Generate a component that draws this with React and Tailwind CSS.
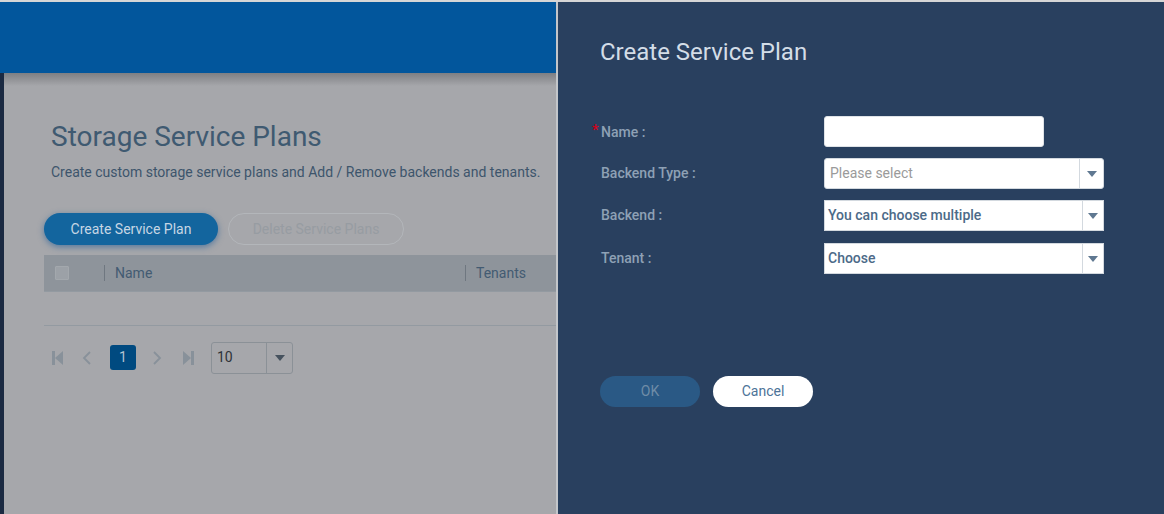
import React from "react";

function Caret({ className = "" }) {
  return (
    <svg width="10" height="6" viewBox="0 0 10 6" className={className}>
      <path d="M0 0 H10 L5 6 Z" fill="currentColor" />
    </svg>
  );
}

function SelectBox({ text, placeholder, rounded, btnW }) {
  return (
    <div
      className={`flex h-[31px] w-[280px] bg-white border border-[#d3d9df] ${rounded ? "rounded-[3px]" : ""}`}
    >
      <div
        className={`flex-1 flex items-center text-[14px] ${placeholder ? "pl-[5px] text-[#9a9a9a]" : "pl-[3px] text-[#4c6a88] font-medium"}`}
      >
        {text}
      </div>
      <div className={`${btnW} border-l border-[#d3d9df] flex items-center justify-center text-[#5f7891]`}>
        <Caret />
      </div>
    </div>
  );
}

export default function App() {
  return (
    <div
      className="w-[1164px] h-[514px] overflow-hidden flex flex-col bg-[#29405f]"
      style={{ fontFamily: "Roboto, 'Noto Sans', sans-serif" }}
    >
      <div className="h-[2px] bg-[#d6d6d6] shrink-0" />
      <div className="flex flex-1 min-h-0">
        {/* left dimmed page */}
        <div className="w-[556px] flex flex-col shrink-0 overflow-hidden">
          <div className="h-[71px] bg-[#02569c] shrink-0" />
          <div className="flex flex-1 min-h-0">
            <div className="w-[4px] bg-[#1b2a42] shrink-0" />
            <div className="flex-1 bg-[linear-gradient(to_bottom,#7e7f83_0px,#a6a7ab_13px,#a6a7ab_100%)] pl-[40px] pt-[46px] overflow-hidden">
              <div className="pl-[7px] text-[28px] leading-[36px] text-[#3f5a71]">Storage Service Plans</div>
              <div className="pl-[7px] mt-[7px] text-[14px] leading-[20px] text-[#3d556c] whitespace-nowrap">
                Create custom storage service plans and Add / Remove backends and tenants.
              </div>
              <div className="flex items-center gap-[10px] mt-[31px]">
                <div className="w-[174px] h-[32px] rounded-full bg-[#13659e] shadow-[0_2px_6px_rgba(30,90,150,0.6)] flex items-center justify-center text-[14px] text-[#c6d6e4]">
                  Create Service Plan
                </div>
                <div className="w-[176px] h-[32px] rounded-full border border-[#b3b6ba] flex items-center justify-center text-[14px] text-[#979ca2]">
                  Delete Service Plans
                </div>
              </div>
              <div className="mt-[10px] w-[560px] h-[36px] bg-[#8e949b] flex items-center text-[14px] text-[#435b72]">
                <div className="w-[14px] h-[14px] ml-[11px] bg-[#9ca1a7] border border-[#a3a8ad] rounded-[1px]" />
                <div className="w-px h-[16px] bg-[#6f7780] ml-[35px]" />
                <div className="ml-[10px] w-[350px]">Name</div>
                <div className="w-px h-[16px] bg-[#6f7780]" />
                <div className="ml-[10px]">Tenants</div>
              </div>
              <div className="w-[560px] h-[35px] border-t border-b border-[#939aa1]" />
              <div className="flex items-center mt-[16px] h-[31px]">
                <svg width="12" height="16" viewBox="0 0 12 16" className="ml-[8px] text-[#88919a]">
                  <rect x="0" y="1" width="3" height="14" fill="currentColor" />
                  <path d="M3 8 L11 1 V15 Z" fill="currentColor" />
                </svg>
                <svg width="10" height="16" viewBox="0 0 10 16" className="ml-[18px] text-[#88919a]">
                  <path d="M8 2 L2 8 L8 14" stroke="currentColor" strokeWidth="1.8" fill="none" />
                </svg>
                <div className="ml-[18px] w-[26px] h-[25px] rounded-[3px] bg-[#004a80] flex items-center justify-center text-[14px] text-[#b3c3d1]">
                  1
                </div>
                <svg width="10" height="16" viewBox="0 0 10 16" className="ml-[16px] text-[#88919a]">
                  <path d="M2 2 L8 8 L2 14" stroke="currentColor" strokeWidth="1.8" fill="none" />
                </svg>
                <svg width="12" height="16" viewBox="0 0 12 16" className="ml-[20px] text-[#88919a]">
                  <path d="M1 1 L9 8 L1 15 Z" fill="currentColor" />
                  <rect x="9" y="1" width="3" height="14" fill="currentColor" />
                </svg>
                <div className="ml-[17px] w-[82px] h-[32px] border border-[#8b9197] rounded-[3px] flex">
                  <div className="flex-1 flex items-center pl-[5px] text-[14px] text-[#2e3338]">10</div>
                  <div className="w-[26px] border-l border-[#8b9197] flex items-center justify-center text-[#46525e]">
                    <Caret />
                  </div>
                </div>
              </div>
            </div>
          </div>
        </div>
        <div className="w-[2px] bg-[#c3c6ca] shrink-0" />
        {/* right panel */}
        <div className="flex-1 bg-[#29405f] pl-[42px] pt-[34px]">
          <div className="text-[24px] leading-[32px] text-[#d3dde7]">Create Service Plan</div>
          <div className="mt-[48px] flex flex-col">
            <div className="flex items-center">
              <div className="w-[224px] pl-px pt-px relative text-[14px] font-medium text-[#8ea1b5]">
                <span className="absolute left-[-8px] top-[-2px] text-[15px] text-[#d0021b]">*</span>
                Name :
              </div>
              <div className="w-[220px] h-[31px] bg-white rounded-[3px] border border-[#dfe3e7]" />
            </div>
            <div className="flex items-center mt-[11px]">
              <div className="w-[224px] pl-px text-[14px] font-medium text-[#8ea1b5]">Backend Type :</div>
              <SelectBox text="Please select" placeholder rounded btnW="w-[24px]" />
            </div>
            <div className="flex items-center mt-[11px]">
              <div className="w-[224px] pl-px text-[14px] font-medium text-[#8ea1b5]">Backend :</div>
              <SelectBox text="You can choose multiple" btnW="w-[21px]" />
            </div>
            <div className="flex items-center mt-[12px]">
              <div className="w-[224px] pl-px text-[14px] font-medium text-[#8ea1b5]">Tenant :</div>
              <SelectBox text="Choose" btnW="w-[21px]" />
            </div>
          </div>
          <div className="mt-[102px] flex gap-[13px]">
            <div className="w-[100px] h-[31px] rounded-full bg-[#2a5985] flex items-center justify-center text-[14px] text-[#6f8ca7]">
              OK
            </div>
            <div className="w-[100px] h-[31px] rounded-full bg-white flex items-center justify-center text-[14px] text-[#4d7398]">
              Cancel
            </div>
          </div>
        </div>
      </div>
    </div>
  );
}
